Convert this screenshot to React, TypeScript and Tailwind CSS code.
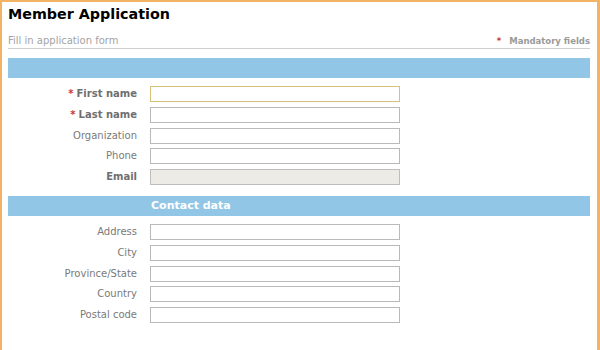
const personal = [
  { label: "First name", required: true, focus: true },
  { label: "Last name", required: true },
  { label: "Organization" },
  { label: "Phone" },
  { label: "Email", bold: true, disabled: true },
];

const contact = ["Address", "City", "Province/State", "Country", "Postal code"];

type Field = { label: string; required?: boolean; focus?: boolean; bold?: boolean; disabled?: boolean };

function Row({ f }: { f: Field }) {
  const strong = f.required || f.bold;
  let inputCls = "h-4 w-[250px] border border-[#b9b9b9] bg-white";
  if (f.focus) inputCls = "h-4 w-[250px] border border-[#d6c27a] bg-white";
  if (f.disabled) inputCls = "h-4 w-[250px] border border-[#bdbdbd] bg-[#ecebe6]";
  return (
    <div className="flex items-center">
      <div
        className={
          "w-[129px] text-right text-[10px] leading-4 " +
          (strong ? "font-bold text-[#6f6f6f]" : "text-[#7a7a7a]")
        }
      >
        {f.required && <span className="text-[#c0394b] mr-[3px]">*</span>}
        {f.label}
      </div>
      <div className={"ml-[13px] " + inputCls} />
    </div>
  );
}

export default function App() {
  return (
    <div
      className="h-[350px] w-[600px] bg-white border-l-2 border-t-2 border-r-[3px] border-[#f2b365] pl-[6px] pr-[6px]"
      style={{ fontFamily: '"DejaVu Sans", Verdana, sans-serif' }}
    >
      <h1 className="pt-[3px] text-[14.3px] leading-[18px] font-bold text-black">Member Application</h1>
      <div className="mt-[11px] flex items-end justify-between border-b border-[#cfcfcf] mr-[1px]">
        <span className="text-[10px] leading-[14px] text-[#a3a3a3]">Fill in application form</span>
        <span className="text-[8.5px] leading-[14px] font-bold text-[#9a9a9a]">
          <span className="text-[#c0394b] mr-[8px]">*</span>Mandatory fields
        </span>
      </div>

      <div className="mt-[9px] h-5 bg-[#91c6e7] mr-[1px]" />
      <div className="mt-[8px] flex flex-col gap-[4.75px]">
        {personal.map((f) => (
          <Row key={f.label} f={f} />
        ))}
      </div>

      <div className="mt-[11px] h-5 bg-[#91c6e7] mr-[1px] flex items-center">
        <span className="ml-[143px] text-[11px] font-bold text-white">Contact data</span>
      </div>
      <div className="mt-[8px] flex flex-col gap-[4.75px]">
        {contact.map((l) => (
          <Row key={l} f={{ label: l }} />
        ))}
      </div>
    </div>
  );
}
